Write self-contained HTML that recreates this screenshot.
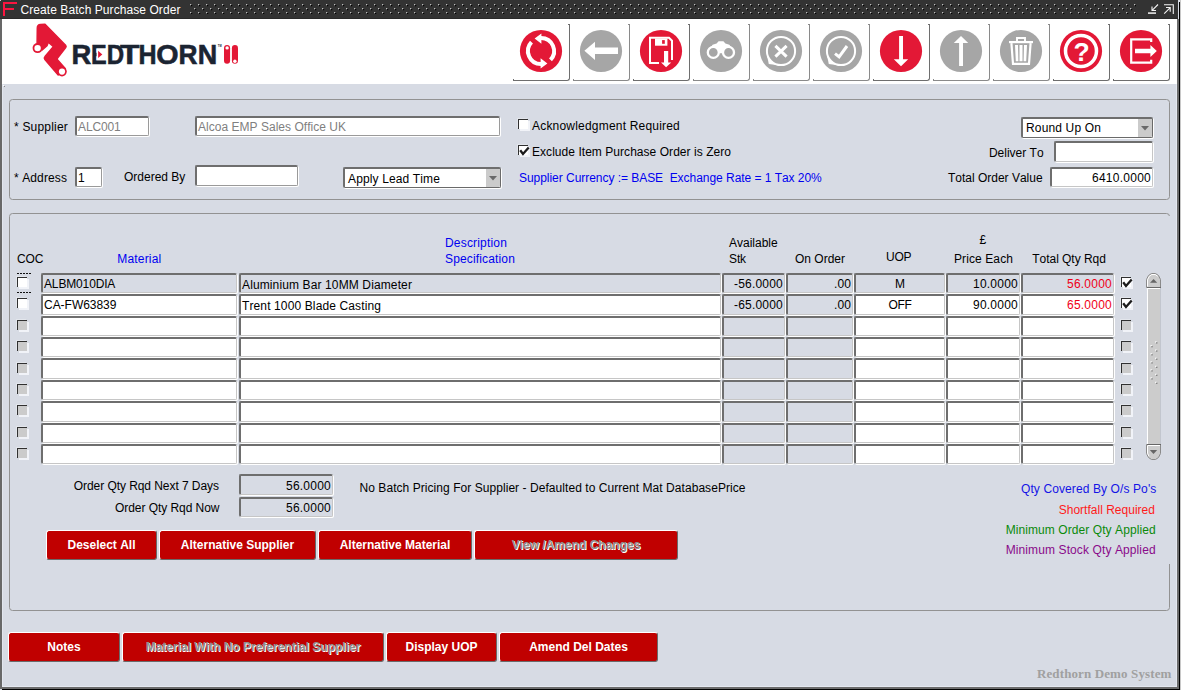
<!DOCTYPE html>
<html><head><meta charset="utf-8"><title>Create Batch Purchase Order</title>
<style>
html,body{margin:0;padding:0}
body{width:1181px;height:690px;position:relative;overflow:hidden;background:#d7dbe4;font-family:"Liberation Sans",Arial,sans-serif;font-size:12px;line-height:14px;color:#000;font-kerning:none}
.a{position:absolute}
.t{position:absolute;white-space:pre;font-size:12px;line-height:14px}
.r{text-align:right}
.c{text-align:center}
.blue{color:#0000f0}
.f{position:absolute;box-sizing:border-box;background:#fff;border-top:2px solid #6e6e6e;border-left:2px solid #6e6e6e;border-right:1px solid #9a9a9a;border-bottom:1px solid #9a9a9a;border-radius:2px;box-shadow:1px 1px 0 #fff;white-space:pre;overflow:hidden;font-size:12px;line-height:14px}
.f.g{background:#d7dbe4}
.f.gr{border-right-color:#c6c6c6;border-bottom-color:#c6c6c6}
.f span{position:absolute;top:2px;left:1px;right:1px}
.cb{position:absolute;box-sizing:border-box;width:10px;height:10px;background:#fff;border-top:1px solid #303030;border-left:1px solid #303030;box-shadow:2px 2px 0 #f1f3f8,-1px -1px 0 rgba(255,255,255,.3)}
.cb.d{background:#cbcbcb}
.btn{position:absolute;box-sizing:border-box;height:30px;background:#c00000;border-top:1px solid #fff;border-left:1px solid #fff;border-right:1px solid #6a6a6a;border-bottom:1px solid #6a6a6a;border-radius:3px;color:#fff;font-weight:bold;font-size:12px;line-height:14px;text-align:center;white-space:pre}
.btn span{position:absolute;left:0;right:0;top:7px}
.btn.dis{color:#8f8f8f;text-shadow:1px 1px 0 #fff}
.tb{position:absolute;box-sizing:border-box;top:24px;width:57px;height:57px;border-right:1px solid #6e6e6e;border-bottom:1px solid #6e6e6e;border-radius:0 0 3px 0}
.tb.dis{border-color:#8a8a8a}
.tb::before{content:"";position:absolute;right:0;top:0;width:1px;height:1px;background:#6e6e6e}
.tb::after{content:"";position:absolute;left:0;bottom:0;width:1px;height:1px;background:#6e6e6e}
.tb.dis::before,.tb.dis::after{background:#8a8a8a}
.tb svg{position:absolute;left:0;top:0}
.fr{position:absolute;box-sizing:border-box;border:1px solid #929292;border-radius:3.5px}
</style></head><body>

<div class="a" style="left:0;top:0;width:1178px;height:19px;background:#333"></div>
<div class="a" style="left:0;top:18px;width:1178px;height:1px;background:#2a2a2a"></div>
<svg class="a" style="left:186px;top:0" width="956" height="18"><defs><pattern id="dp" x="4" y="4" width="8" height="8" patternUnits="userSpaceOnUse"><rect x="0" y="0" width="1.25" height="1.25" fill="#bdbdbd"/><rect x="1" y="1" width="1.25" height="1.25" fill="#000"/><rect x="4" y="4" width="1.25" height="1.25" fill="#bdbdbd"/><rect x="5" y="5" width="1.25" height="1.25" fill="#000"/></pattern></defs><rect x="4" y="4" width="946" height="10" fill="url(#dp)"/></svg>
<svg class="a" style="left:0;top:0" width="20" height="19"><path d="M4 16V3H17M4 9H14" fill="none" stroke="#fb1640" stroke-width="2"/></svg>
<div class="t" style="left:20.5px;top:3px;color:#fff;letter-spacing:0.071px">Create Batch Purchase Order</div>
<svg class="a" style="left:1144px;top:0" width="34" height="19" fill="none" stroke="#f4f4f4" stroke-width="1.1"><path d="M4 13.1H12" stroke-width="1.5"/><path d="M14 4.5L8.2 10.3M8 6.5V10.5H12" /><path d="M20 4.7H29.3V14"/><path d="M20.2 13.6L26 7.8M22 7.5H26.2V11.7"/></svg>
<div class="a" style="left:2px;top:19px;width:1175px;height:65px;background:#fff"></div>
<div class="a" style="left:0;top:19px;width:2px;height:670px;background:#686868"></div>
<div class="a" style="left:2px;top:84px;width:1px;height:602px;background:#e2e6ee"></div>
<div class="a" style="left:0;top:0;width:1px;height:1px;background:#d0d0d0"></div>
<div class="a" style="left:3px;top:85px;width:1px;height:1px;background:#fff"></div><div class="a" style="left:4px;top:86px;width:1px;height:1px;background:#8a8a8a"></div>
<div class="a" style="left:1176px;top:84px;width:1px;height:603px;background:#e4e8f0"></div>
<div class="a" style="left:2px;top:686px;width:1175px;height:1px;background:#e4e8f0"></div>
<div class="a" style="left:1177px;top:19px;width:2px;height:670px;background:#6b6b6b"></div>
<div class="a" style="left:0;top:687px;width:1179px;height:2px;background:#6b6b6b"></div>
<div class="a" style="left:1179px;top:2px;width:1px;height:688px;background:#000"></div>
<div class="a" style="left:2px;top:689px;width:1178px;height:1px;background:#000"></div>
<div class="a" style="left:1180px;top:0;width:1px;height:690px;background:#c8c8c8"></div>
<svg class="a" style="left:25px;top:19px" width="220" height="64" viewBox="25 19 220 64">
<path d="M37.3 28Q37.3 24.6 40.5 24.4L45 24.2L65.6 45.2Q66.6 46.4 65.7 47.6L56.8 59L65.2 68.4L58.2 75L44.9 59.6Q43.6 57.9 45 56.4L53.5 46.6L48.3 42.2L47 45.8L42.2 49.9L37.7 48.1L37.1 43Z" fill="#e31836" stroke="#e31836" stroke-width="1.5" stroke-linejoin="round"/>
<circle cx="37.6" cy="48.1" r="5" fill="#e31836"/><circle cx="37.6" cy="48.1" r="3.2" fill="#fff"/>
<circle cx="62" cy="71.6" r="4.8" fill="#e31836"/><circle cx="62" cy="71.6" r="3.1" fill="#fff"/>
<g font-family="Liberation Sans,Arial,sans-serif" font-weight="bold" font-size="27" fill="#1b2432" stroke="#1b2432" stroke-width="0.55"><text><tspan x="71.4" y="63.7" textLength="19.8" lengthAdjust="spacingAndGlyphs">R</tspan><tspan x="91.1" y="63.7" textLength="15.7" lengthAdjust="spacingAndGlyphs">E</tspan><tspan x="106.7" y="63.7" textLength="17.4" lengthAdjust="spacingAndGlyphs">D</tspan><tspan x="119.9" y="63.7" textLength="19.4" lengthAdjust="spacingAndGlyphs">T</tspan><tspan x="138.5" y="63.7" textLength="18.1" lengthAdjust="spacingAndGlyphs">H</tspan><tspan x="156.2" y="63.7" textLength="22.3" lengthAdjust="spacingAndGlyphs">O</tspan><tspan x="178.6" y="63.7" textLength="19" lengthAdjust="spacingAndGlyphs">R</tspan><tspan x="197.7" y="63.7" textLength="19.5" lengthAdjust="spacingAndGlyphs">N</tspan></text></g>
<rect x="96.6" y="49" width="9.5" height="10.8" fill="#fff"/>
<path d="M98.1 50.8L102.3 54.4L98.1 58Z" fill="#e31836"/>
<text x="217.8" y="47.2" font-family="Liberation Sans,Arial,sans-serif" font-weight="bold" font-size="2.6" fill="#1b2432">TM</text>
<rect x="224" y="45.1" width="6.1" height="18.7" rx="3.05" fill="#e31836"/>
<rect x="231.9" y="45.1" width="6.1" height="18.7" rx="3.05" fill="#e31836"/>
<circle cx="227.1" cy="47.9" r="1.7" fill="#fff"/><circle cx="234.9" cy="61.2" r="1.7" fill="#fff"/>
</svg>
<div class="tb" style="left:513px"><svg width="56" height="56" viewBox="-28 -27 56 56"><circle cx="0" cy="0" r="21.1" fill="#e31836"/><g fill="none" stroke="#fff" stroke-width="4"><path d="M0 -13A13 13 0 0 1 9.5 8.9"/><path d="M-9.5 -8.9A13 13 0 0 0 0 13"/></g><path d="M-6.4 -12.4L0.4 -17.4V-7.2Z M6.4 12.4L-0.4 17.4V7.2Z" fill="#fff"/></svg></div>
<div class="tb dis" style="left:573px"><svg width="56" height="56" viewBox="-28 -27 56 56"><circle cx="0" cy="0" r="21.1" fill="#a6a6a6"/><path d="M-16.6 -0.2L-6 -9.2V-3.4H17V3H-6V9Z" fill="#fff"/></svg></div>
<div class="tb" style="left:633px"><svg width="56" height="56" viewBox="-28 -27 56 56"><circle cx="0" cy="0" r="21.1" fill="#e31836"/><path d="M-2 12H-11V-13.3H8L11 -10.3V9" fill="none" stroke="#fff" stroke-width="2"/><rect x="-6" y="-12.5" width="12.4" height="7.2" fill="#fff"/><rect x="1.1" y="-10.9" width="2.7" height="3.7" fill="#e31836"/><rect x="3" y="0" width="4.2" height="12" fill="#fff"/><path d="M0 11.6H10.2L5.1 16.3Z" fill="#fff"/></svg></div>
<div class="tb dis" style="left:693px"><svg width="56" height="56" viewBox="-28 -27 56 56"><circle cx="0" cy="0" r="21.1" fill="#a6a6a6"/><path d="M-11.2 -2.2L-8.4 -6.2L-4.4 -7.6L-2.4 -9.7H2.4L4.4 -7.6L8.4 -6.2L11.2 -2.2L7.5 1L2 2.2H-2L-7.7 1Z" fill="#fff"/><circle cx="-7.7" cy="1.4" r="5.5" fill="#a6a6a6" stroke="#fff" stroke-width="2.3"/><circle cx="7.5" cy="1.4" r="5.5" fill="#a6a6a6" stroke="#fff" stroke-width="2.3"/></svg></div>
<div class="tb dis" style="left:753px"><svg width="56" height="56" viewBox="-28 -27 56 56"><circle cx="0" cy="0" r="21.1" fill="#a6a6a6"/><path d="M-14 4.6L-12.2 12.9L-4.6 14Z" fill="#fff"/><circle cx="0" cy="0" r="14.1" fill="#a6a6a6" stroke="#fff" stroke-width="2"/><!--#a6a6a6--><path d="M-5.6 -5.2L5.6 5.6M5.6 -5.2L-5.6 5.6" stroke="#fff" stroke-width="3" fill="none"/></svg></div>
<div class="tb dis" style="left:813px"><svg width="56" height="56" viewBox="-28 -27 56 56"><circle cx="0" cy="0" r="21.1" fill="#a6a6a6"/><path d="M-14 4.6L-12.2 12.9L-4.6 14Z" fill="#fff"/><circle cx="0" cy="0" r="14.1" fill="#a6a6a6" stroke="#fff" stroke-width="2"/><!--#a6a6a6--><path d="M-6 2.6L-1.9 5.8L6 -5" stroke="#fff" stroke-width="3" fill="none"/></svg></div>
<div class="tb" style="left:873px"><svg width="56" height="56" viewBox="-28 -27 56 56"><circle cx="0" cy="0" r="21.1" fill="#e31836"/><path d="M-1.9 -15H2V8.3H7.2L0 15.3L-7.2 8.3H-1.9Z" fill="#fff"/></svg></div>
<div class="tb dis" style="left:933px"><svg width="56" height="56" viewBox="-28 -27 56 56"><circle cx="0" cy="0" r="21.1" fill="#a6a6a6"/><path d="M-1.9 15H2V-7.9H7.2L0 -15L-7.2 -7.9H-1.9Z" fill="#fff"/></svg></div>
<div class="tb dis" style="left:993px"><svg width="56" height="56" viewBox="-28 -27 56 56"><circle cx="0" cy="0" r="21.1" fill="#a6a6a6"/><path d="M-4 -9.8V-13H4V-9.8" fill="none" stroke="#fff" stroke-width="1.9"/><rect x="-12" y="-10" width="24" height="2.2" fill="#fff"/><path d="M-9.6 -7.9L-8 12.9H8L9.6 -7.9" fill="none" stroke="#fff" stroke-width="2.2"/><path d="M-6 -6L-5.2 10.2H-2.6L-3 -6ZM-1.5 -6H1.5V10.2H-1.5ZM3 -6L2.6 10.2H5.2L6 -6Z" fill="#fff"/></svg></div>
<div class="tb" style="left:1053px"><svg width="56" height="56" viewBox="-28 -27 56 56"><circle cx="0" cy="0" r="21.1" fill="#e31836"/><circle cx="0" cy="0" r="15.5" fill="none" stroke="#fff" stroke-width="3.5"/><text x="0.6" y="9.6" text-anchor="middle" font-family="Liberation Sans,Arial,sans-serif" font-weight="bold" font-size="26.5" fill="#fff">?</text></svg></div>
<div class="tb" style="left:1113px"><svg width="56" height="56" viewBox="-28 -27 56 56"><circle cx="0" cy="0" r="21.1" fill="#e31836"/><path d="M10.2 -9V-11.7H-9.8V11.7H10.2V8.7" fill="none" stroke="#fff" stroke-width="2.2"/><path d="M-6 -2.3H9.4V-6L15.8 0L9.4 6V2.3H-6Z" fill="#fff"/></svg></div>
<div class="fr" style="left:9px;top:99px;width:1161px;height:101px"></div>
<div class="fr" style="left:9px;top:213px;width:1161px;height:398px"></div>
<div class="a" style="left:1169px;top:216px;width:1px;height:348px;background:#d7dbe4"></div>
<div class="t " style="left:14px;top:120px;letter-spacing:0.197px;">* Supplier</div>
<div class="f " style="left:75px;top:116px;width:74px;height:20px;"><span style="letter-spacing:-0.12px;color:#808080;">ALC001</span></div>
<div class="f " style="left:195px;top:116px;width:305px;height:20px;"><span style="letter-spacing:0.025px;color:#808080;">Alcoa EMP Sales Office UK</span></div>
<div class="t " style="left:14px;top:171px;letter-spacing:0.108px;">* Address</div>
<div class="f " style="left:75px;top:167px;width:27px;height:20px;"><span style="letter-spacing:0.326px;">1</span></div>
<div class="t " style="left:124px;top:170px;letter-spacing:0px;">Ordered By</div>
<div class="f " style="left:195px;top:165px;width:103px;height:21px;"></div>
<div class="f" style="left:343px;top:167px;width:158px;height:21px;border-right-color:#6a6a6a;border-bottom-color:#6a6a6a"><span style="left:3px;top:3px;letter-spacing:0.13px">Apply Lead Time</span><i class="a" style="right:0;top:0;bottom:0;width:14px;background:#cbcbcb"></i><svg class="a" style="right:3px;top:7px" width="8" height="5"><path d="M0 0H8L4 4.5Z" fill="#6a6a6a"/></svg></div>
<div class="cb" style="left:518px;top:119px"></div>
<div class="t " style="left:532px;top:119px;letter-spacing:0.199px;">Acknowledgment Required</div>
<div class="cb" style="left:518px;top:145px"><svg class="a" style="left:-1px;top:-1px;overflow:visible" width="13" height="12"><path d="M2.2 5.2L5 9L10.7 2.4" fill="none" stroke="#1c1c1c" stroke-width="2.3"/></svg></div>
<div class="t " style="left:532px;top:145px;letter-spacing:0.045px;">Exclude Item Purchase Order is Zero</div>
<div class="t blue" style="left:519px;top:171px;letter-spacing:-0.04px;">Supplier Currency := BASE  Exchange Rate = 1 Tax 20%</div>
<div class="f" style="left:1021px;top:117px;width:132px;height:21px;border-right-color:#6a6a6a;border-bottom-color:#6a6a6a"><span style="left:3px;top:2px;letter-spacing:0.148px">Round Up On</span><i class="a" style="right:0;top:0;bottom:0;width:14px;background:#cbcbcb"></i><svg class="a" style="right:3px;top:7px" width="8" height="5"><path d="M0 0H8L4 4.5Z" fill="#6a6a6a"/></svg></div>
<div class="t r " style="left:743.6px;width:300px;top:146px;letter-spacing:0px;">Deliver To</div>
<div class="f gr" style="left:1054px;top:141px;width:99px;height:21px;"></div>
<div class="t r " style="left:742.6px;width:300px;top:171px;letter-spacing:0px;">Total Order Value</div>
<div class="f gr" style="left:1050px;top:167px;width:103px;height:20px;"><span style="letter-spacing:0.253px;text-align:right;">6410.0000</span></div>
<div class="t " style="left:17px;top:252px;letter-spacing:-0.1px;">COC</div>
<div class="t blue" style="left:117.3px;top:252px;letter-spacing:0.165px;">Material</div>
<div class="t blue" style="left:445px;top:236px;letter-spacing:0.18px;">Description</div>
<div class="t blue" style="left:445px;top:252px;letter-spacing:0.151px;">Specification</div>
<div class="t " style="left:729px;top:236px;letter-spacing:0px;">Available</div>
<div class="t " style="left:729px;top:252px;letter-spacing:-0.113px;">Stk</div>
<div class="t " style="left:795px;top:252px;letter-spacing:-0.002px;">On Order</div>
<div class="t " style="left:886px;top:250px;letter-spacing:-0.2px;">UOP</div>
<div class="t " style="left:979.5px;top:233px;letter-spacing:0.326px;">£</div>
<div class="t " style="left:954px;top:252px;letter-spacing:0.097px;">Price Each</div>
<div class="t " style="left:1032.3px;top:252px;letter-spacing:-0.04px;">Total Qty Rqd</div>
<div class="f gr g" style="left:41px;top:273px;width:196px;height:20px;"><span style="letter-spacing:-0.15px;">ALBM010DIA</span></div>
<div class="f gr g" style="left:239px;top:273px;width:482px;height:20px;line-height:16px"><span style="letter-spacing:0.122px;">Aluminium Bar 10MM Diameter</span></div>
<div class="f gr g" style="left:722px;top:273px;width:63px;height:20px;"><span style="letter-spacing:0.203px;text-align:right;">-56.0000</span></div>
<div class="f gr g" style="left:786px;top:273px;width:67px;height:20px;"><span style="letter-spacing:0.106px;text-align:right;">.00</span></div>
<div class="f gr g" style="left:854px;top:273px;width:91px;height:20px;"><span style="letter-spacing:0.004px;text-align:center;">M</span></div>
<div class="f gr g" style="left:946px;top:273px;width:74px;height:20px;"><span style="letter-spacing:0.232px;text-align:right;">10.0000</span></div>
<div class="f gr g" style="left:1021px;top:273px;width:93px;height:20px;"><span style="letter-spacing:0.232px;text-align:right;color:#f00018;">56.0000</span></div>
<div class="cb" style="left:17px;top:277px"></div>
<div class="cb" style="left:1121px;top:277px"><svg class="a" style="left:-1px;top:-1px;overflow:visible" width="13" height="12"><path d="M2.2 5.2L5 9L10.7 2.4" fill="none" stroke="#1c1c1c" stroke-width="2.3"/></svg></div>
<div class="f gr" style="left:41px;top:294px;width:196px;height:21px;"><span style="letter-spacing:-0.03px;">CA-FW63839</span></div>
<div class="f gr" style="left:239px;top:294px;width:482px;height:21px;line-height:16px"><span style="letter-spacing:0.122px;">Trent 1000 Blade Casting</span></div>
<div class="f gr g" style="left:722px;top:294px;width:63px;height:21px;"><span style="letter-spacing:0.203px;text-align:right;">-65.0000</span></div>
<div class="f gr g" style="left:786px;top:294px;width:67px;height:21px;"><span style="letter-spacing:0.106px;text-align:right;">.00</span></div>
<div class="f gr" style="left:854px;top:294px;width:91px;height:21px;"><span style="letter-spacing:-0.4px;text-align:center;">OFF</span></div>
<div class="f gr" style="left:946px;top:294px;width:74px;height:21px;"><span style="letter-spacing:0.232px;text-align:right;">90.0000</span></div>
<div class="f gr" style="left:1021px;top:294px;width:93px;height:21px;"><span style="letter-spacing:0.232px;text-align:right;color:#f00018;">65.0000</span></div>
<div class="cb" style="left:17px;top:298px"></div>
<div class="cb" style="left:1121px;top:298px"><svg class="a" style="left:-1px;top:-1px;overflow:visible" width="13" height="12"><path d="M2.2 5.2L5 9L10.7 2.4" fill="none" stroke="#1c1c1c" stroke-width="2.3"/></svg></div>
<div class="f gr" style="left:41px;top:316px;width:196px;height:20px;"></div>
<div class="f gr" style="left:239px;top:316px;width:482px;height:20px;line-height:16px"></div>
<div class="f gr g" style="left:722px;top:316px;width:63px;height:20px;"></div>
<div class="f gr g" style="left:786px;top:316px;width:67px;height:20px;"></div>
<div class="f gr" style="left:854px;top:316px;width:91px;height:20px;"></div>
<div class="f gr" style="left:946px;top:316px;width:74px;height:20px;"></div>
<div class="f gr" style="left:1021px;top:316px;width:93px;height:20px;"></div>
<div class="cb d" style="left:17px;top:320px"></div>
<div class="cb d" style="left:1121px;top:320px"></div>
<div class="f gr" style="left:41px;top:337px;width:196px;height:20px;"></div>
<div class="f gr" style="left:239px;top:337px;width:482px;height:20px;line-height:16px"></div>
<div class="f gr g" style="left:722px;top:337px;width:63px;height:20px;"></div>
<div class="f gr g" style="left:786px;top:337px;width:67px;height:20px;"></div>
<div class="f gr" style="left:854px;top:337px;width:91px;height:20px;"></div>
<div class="f gr" style="left:946px;top:337px;width:74px;height:20px;"></div>
<div class="f gr" style="left:1021px;top:337px;width:93px;height:20px;"></div>
<div class="cb d" style="left:17px;top:341px"></div>
<div class="cb d" style="left:1121px;top:341px"></div>
<div class="f gr" style="left:41px;top:358px;width:196px;height:21px;"></div>
<div class="f gr" style="left:239px;top:358px;width:482px;height:21px;line-height:16px"></div>
<div class="f gr g" style="left:722px;top:358px;width:63px;height:21px;"></div>
<div class="f gr g" style="left:786px;top:358px;width:67px;height:21px;"></div>
<div class="f gr" style="left:854px;top:358px;width:91px;height:21px;"></div>
<div class="f gr" style="left:946px;top:358px;width:74px;height:21px;"></div>
<div class="f gr" style="left:1021px;top:358px;width:93px;height:21px;"></div>
<div class="cb d" style="left:17px;top:363px"></div>
<div class="cb d" style="left:1121px;top:363px"></div>
<div class="f gr" style="left:41px;top:380px;width:196px;height:20px;"></div>
<div class="f gr" style="left:239px;top:380px;width:482px;height:20px;line-height:16px"></div>
<div class="f gr g" style="left:722px;top:380px;width:63px;height:20px;"></div>
<div class="f gr g" style="left:786px;top:380px;width:67px;height:20px;"></div>
<div class="f gr" style="left:854px;top:380px;width:91px;height:20px;"></div>
<div class="f gr" style="left:946px;top:380px;width:74px;height:20px;"></div>
<div class="f gr" style="left:1021px;top:380px;width:93px;height:20px;"></div>
<div class="cb d" style="left:17px;top:384px"></div>
<div class="cb d" style="left:1121px;top:384px"></div>
<div class="f gr" style="left:41px;top:401px;width:196px;height:21px;"></div>
<div class="f gr" style="left:239px;top:401px;width:482px;height:21px;line-height:16px"></div>
<div class="f gr g" style="left:722px;top:401px;width:63px;height:21px;"></div>
<div class="f gr g" style="left:786px;top:401px;width:67px;height:21px;"></div>
<div class="f gr" style="left:854px;top:401px;width:91px;height:21px;"></div>
<div class="f gr" style="left:946px;top:401px;width:74px;height:21px;"></div>
<div class="f gr" style="left:1021px;top:401px;width:93px;height:21px;"></div>
<div class="cb d" style="left:17px;top:405px"></div>
<div class="cb d" style="left:1121px;top:405px"></div>
<div class="f gr" style="left:41px;top:423px;width:196px;height:20px;"></div>
<div class="f gr" style="left:239px;top:423px;width:482px;height:20px;line-height:16px"></div>
<div class="f gr g" style="left:722px;top:423px;width:63px;height:20px;"></div>
<div class="f gr g" style="left:786px;top:423px;width:67px;height:20px;"></div>
<div class="f gr" style="left:854px;top:423px;width:91px;height:20px;"></div>
<div class="f gr" style="left:946px;top:423px;width:74px;height:20px;"></div>
<div class="f gr" style="left:1021px;top:423px;width:93px;height:20px;"></div>
<div class="cb d" style="left:17px;top:427px"></div>
<div class="cb d" style="left:1121px;top:427px"></div>
<div class="f gr" style="left:41px;top:444px;width:196px;height:20px;"></div>
<div class="f gr" style="left:239px;top:444px;width:482px;height:20px;line-height:16px"></div>
<div class="f gr g" style="left:722px;top:444px;width:63px;height:20px;"></div>
<div class="f gr g" style="left:786px;top:444px;width:67px;height:20px;"></div>
<div class="f gr" style="left:854px;top:444px;width:91px;height:20px;"></div>
<div class="f gr" style="left:946px;top:444px;width:74px;height:20px;"></div>
<div class="f gr" style="left:1021px;top:444px;width:93px;height:20px;"></div>
<div class="cb d" style="left:17px;top:448px"></div>
<div class="cb d" style="left:1121px;top:448px"></div>
<div class="a" style="left:17px;top:273px;width:14px;height:1px;background:repeating-linear-gradient(90deg,#111 0 2px,transparent 2px 3px)"></div>
<div class="a" style="left:17px;top:292px;width:14px;height:1px;background:repeating-linear-gradient(90deg,#111 0 2px,transparent 2px 3px)"></div>
<svg class="a" style="left:1144px;top:271px" width="20" height="192" viewBox="1144 271 20 192">
<rect x="1148" y="288" width="12" height="156" fill="#cccccc"/>
<rect x="1147" y="288" width="1" height="156" fill="#fff"/>
<rect x="1147" y="288" width="13" height="1" fill="#fff"/>
<rect x="1160" y="288" width="1" height="156" fill="#c2c6ce"/>
<path d="M1146.5 287.5V279.5L1148.5 275.5L1151.5 273.5H1155.5L1158.5 275.5L1160.5 279.5V287.5Z" fill="#cccccc" stroke="#8a8a8a" stroke-width="1"/>
<path d="M1147.5 286.5V279.8L1149.3 276.3L1151.8 274.5H1155.2L1157.7 276.3" fill="none" stroke="#fff" stroke-width="1"/>
<rect x="1147" y="287" width="14" height="1" fill="#6a6a6a"/>
<path d="M1150 282.8H1157.2L1153.6 278.9Z" fill="#666"/>
<path d="M1146.5 444.5V453.5L1148.5 457.5L1151.5 459.5H1155.5L1158.5 457.5L1160.5 453.5V444.5Z" fill="#cccccc" stroke="#8a8a8a" stroke-width="1"/>
<path d="M1147.5 445.5V453.2L1149 456.4" fill="none" stroke="#fff" stroke-width="1"/>
<rect x="1148" y="445" width="12" height="1" fill="#fff"/>
<rect x="1147" y="444" width="14" height="1" fill="#666"/>
<path d="M1149.8 449.9H1157.2L1153.5 453.9Z" fill="#666"/>

<rect x="1155.25" y="341.3" width="1.4" height="1.4" fill="#fff"/><rect x="1156.1" y="342.25" width="1.3" height="1.3" fill="#777"/>
<rect x="1155.25" y="349.45" width="1.4" height="1.4" fill="#fff"/><rect x="1156.1" y="350.4" width="1.3" height="1.3" fill="#777"/>
<rect x="1155.25" y="357.6" width="1.4" height="1.4" fill="#fff"/><rect x="1156.1" y="358.55" width="1.3" height="1.3" fill="#777"/>
<rect x="1155.25" y="365.7" width="1.4" height="1.4" fill="#fff"/><rect x="1156.1" y="366.65" width="1.3" height="1.3" fill="#777"/>
<rect x="1155.25" y="373.7" width="1.4" height="1.4" fill="#fff"/><rect x="1156.1" y="374.65" width="1.3" height="1.3" fill="#777"/>
<rect x="1155.25" y="381.7" width="1.4" height="1.4" fill="#fff"/><rect x="1156.1" y="382.65" width="1.3" height="1.3" fill="#777"/>
<rect x="1150.5" y="345.1" width="1.4" height="1.4" fill="#fff"/><rect x="1151.35" y="346.05" width="1.3" height="1.3" fill="#777"/>
<rect x="1150.5" y="353.2" width="1.4" height="1.4" fill="#fff"/><rect x="1151.35" y="354.15" width="1.3" height="1.3" fill="#777"/>
<rect x="1150.5" y="361.3" width="1.4" height="1.4" fill="#fff"/><rect x="1151.35" y="362.25" width="1.3" height="1.3" fill="#777"/>
<rect x="1150.5" y="369.3" width="1.4" height="1.4" fill="#fff"/><rect x="1151.35" y="370.25" width="1.3" height="1.3" fill="#777"/>
<rect x="1150.5" y="377.3" width="1.4" height="1.4" fill="#fff"/><rect x="1151.35" y="378.25" width="1.3" height="1.3" fill="#777"/>
</svg>
<div class="t r " style="left:-81.06px;width:300px;top:479px;letter-spacing:-0.06px;">Order Qty Rqd Next 7 Days</div>
<div class="f gr g" style="left:239px;top:474px;width:94px;height:21px;line-height:16px"><span style="letter-spacing:0.232px;text-align:right;">56.0000</span></div>
<div class="t r " style="left:-80.55px;width:300px;top:501px;letter-spacing:-0.05px;">Order Qty Rqd Now</div>
<div class="f gr g" style="left:239px;top:497px;width:94px;height:20px;"><span style="letter-spacing:0.232px;text-align:right;">56.0000</span></div>
<div class="t " style="left:359.5px;top:481px;letter-spacing:0.055px;">No Batch Pricing For Supplier - Defaulted to Current Mat DatabasePrice</div>
<div class="t r " style="left:856.404px;width:300px;top:482px;letter-spacing:0.104px;color:#1414e6">Qty Covered By O/s Po's</div>
<div class="t r " style="left:855.014px;width:300px;top:503px;letter-spacing:0.014px;color:#ff1a1a">Shortfall Required</div>
<div class="t r " style="left:855.678px;width:300px;top:523px;letter-spacing:0.078px;color:#0a8a0a">Minimum Order Qty Applied</div>
<div class="t r " style="left:855.705px;width:300px;top:543px;letter-spacing:0.105px;color:#8a0a8a">Minimum Stock Qty Applied</div>
<div class="btn" style="left:46px;top:530px;width:111px"><span style="letter-spacing:0px">Deselect All</span></div>
<div class="btn" style="left:159px;top:530px;width:157px"><span style="letter-spacing:0px">Alternative Supplier</span></div>
<div class="btn" style="left:318px;top:530px;width:154px"><span style="letter-spacing:0px">Alternative Material</span></div>
<div class="btn dis" style="left:474px;top:530px;width:204px"><span style="letter-spacing:0px">View /Amend Changes</span></div>
<div class="btn" style="left:8px;top:632px;width:112px"><span style="letter-spacing:0px">Notes</span></div>
<div class="btn dis" style="left:122px;top:632px;width:262px"><span style="letter-spacing:0px">Material With No Preferential Supplier</span></div>
<div class="btn" style="left:386px;top:632px;width:111px"><span style="letter-spacing:0px">Display UOP</span></div>
<div class="btn" style="left:499px;top:632px;width:159px"><span style="letter-spacing:0px">Amend Del Dates</span></div>
<div class="t r" style="left:871.5px;width:300px;top:666px;font-family:'Liberation Serif',serif;font-weight:bold;font-size:13px;line-height:16px;color:#a0a0a0;letter-spacing:0.12px">Redthorn Demo System</div>
</body></html>
